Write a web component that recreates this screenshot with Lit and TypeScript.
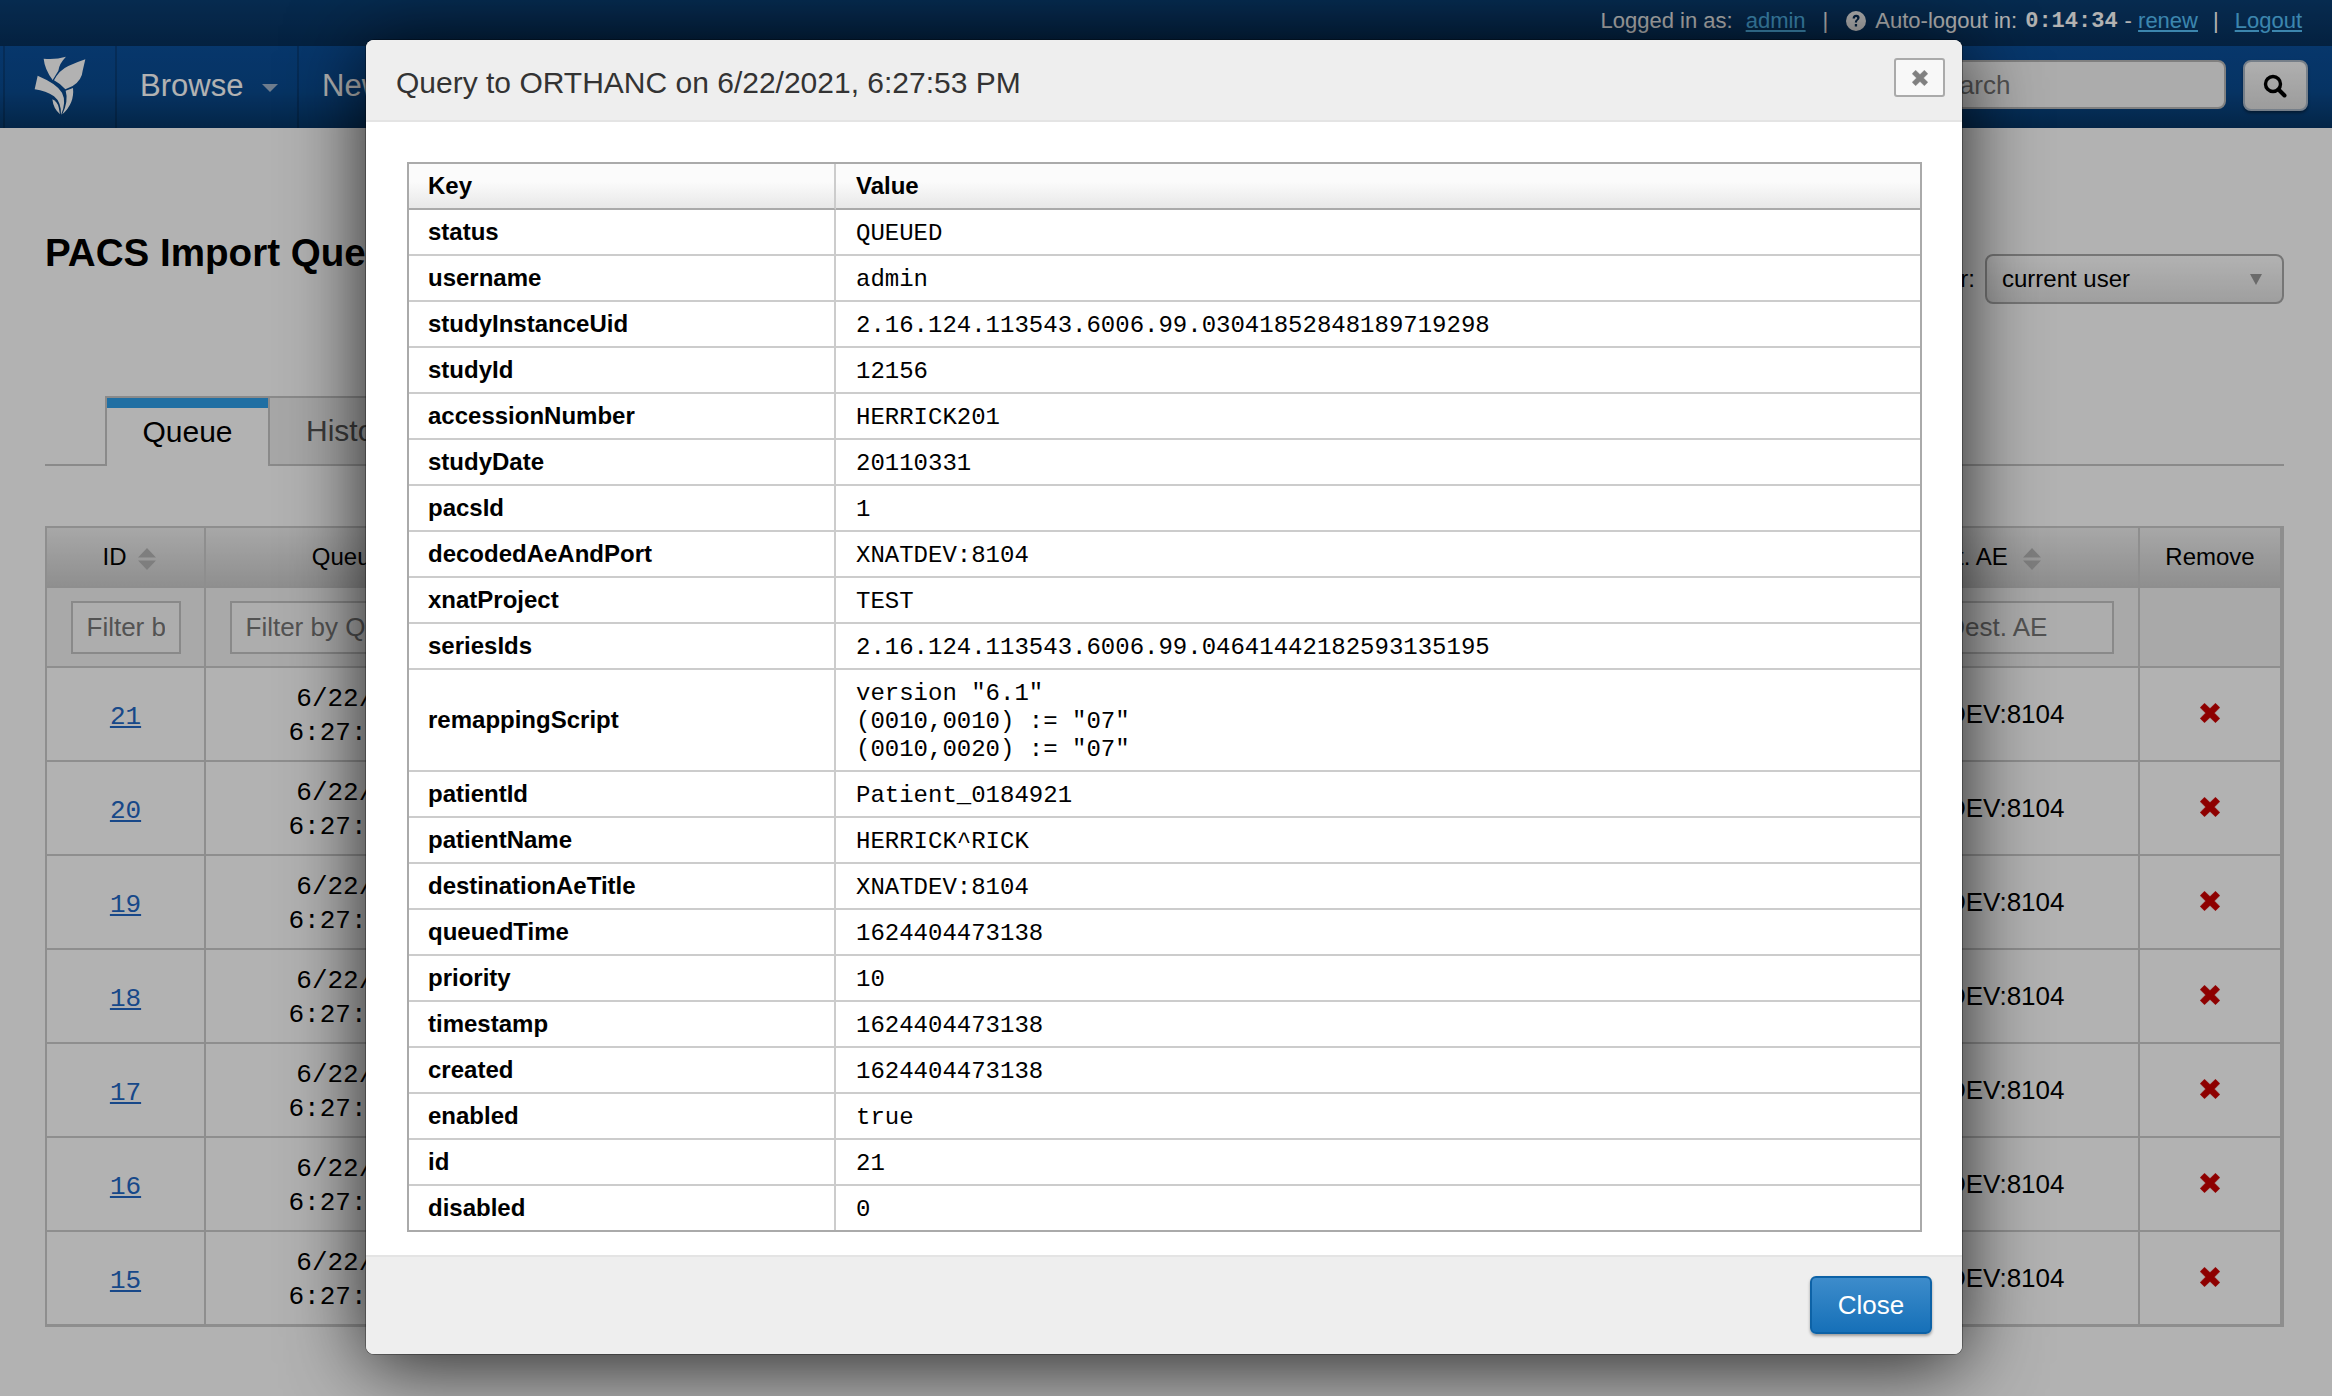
import { LitElement, html, css, svg } from "lit";
import { customElement } from "lit/decorators.js";

const sortIcon = html`<svg class="sort" viewBox="0 0 20 22" width="20" height="22"><path d="M10 0 L19 9.5 H1Z M1 12.5 H19 L10 22Z" fill="#b5b5b5"/></svg>`;
const xIcon = (size: number, cls: string) => html`<svg class=${cls} viewBox="0 0 20 20" width=${size} height=${size}><path d="M4.5 0.3 L10 5.6 L15.5 0.3 L19.8 4.6 L14.4 10 L19.8 15.4 L15.5 19.7 L10 14.4 L4.5 19.7 L0.2 15.4 L5.6 10 L0.2 4.6Z" fill="currentColor" stroke="currentColor" stroke-width="0.5" stroke-linejoin="round"/></svg>`;

const logo = html`<svg class="logo" viewBox="0 0 390 390" width="130" height="130">
  ${svg`<g fill="#fff">
    <path d="M131 176 Q165 180 198 170 Q178 190 175 212 L158 240 Q134 208 131 176Z"/>
    <path d="M256 178 L248 212 Q246 240 218 258 L196 268 Q180 250 162 241 Q178 210 205 198 Q232 186 256 178Z"/>
    <path d="M113 227 L104 268 Q138 273 162 289 Q184 306 183 345 Q200 305 186 278 Q172 252 113 227Z"/>
    <path d="M219 264 Q224 310 187 343 Q206 302 197 272Z"/>
    <path d="M157 298 Q172 305 176 322 L180 343 Q160 326 157 298Z"/>
  </g>`}
</svg>`;

const rows: [string, string][] = [
  ["status", "QUEUED"],
  ["username", "admin"],
  ["studyInstanceUid", "2.16.124.113543.6006.99.03041852848189719298"],
  ["studyId", "12156"],
  ["accessionNumber", "HERRICK201"],
  ["studyDate", "20110331"],
  ["pacsId", "1"],
  ["decodedAeAndPort", "XNATDEV:8104"],
  ["xnatProject", "TEST"],
  ["seriesIds", "2.16.124.113543.6006.99.04641442182593135195"],
  ["remappingScript", 'version "6.1"\n(0010,0010) := "07"\n(0010,0020) := "07"'],
  ["patientId", "Patient_0184921"],
  ["patientName", "HERRICK^RICK"],
  ["destinationAeTitle", "XNATDEV:8104"],
  ["queuedTime", "1624404473138"],
  ["priority", "10"],
  ["timestamp", "1624404473138"],
  ["created", "1624404473138"],
  ["enabled", "true"],
  ["id", "21"],
  ["disabled", "0"],
];

const queueIds = [21, 20, 19, 18, 17, 16, 15];

@customElement("app-root")
export class AppRoot extends LitElement {
  static styles = css`
    :host {
      display: block;
      position: relative;
      width: 2332px;
      height: 1396px;
      overflow: hidden;
      background: #fff;
      font-family: "Liberation Sans", Arial, sans-serif;
      color: #000;
    }
    * { box-sizing: border-box; }

    .topbar {
      height: 46px;
      background: linear-gradient(#0a3e72, #07305c);
      color: #fff;
      font-size: 22px;
      display: flex;
      justify-content: flex-end;
      align-items: center;
      padding: 0 30px 4px 0;
      white-space: nowrap;
    }
    .topbar a { color: #57c1fa; text-decoration: underline; }
    .topbar .gap { margin-left: 13px; }
    .topbar .sep { margin: 0 18px 0 17px; }
    .topbar .sep.b { margin: 0 16px 0 15px; }
    .topbar .help { margin-right: 9px; display: block; }
    .timer { font-family: "Liberation Mono", monospace; font-weight: bold; margin-left: 8px; margin-right: 7px; }

    .nav {
      height: 82px;
      background: linear-gradient(#0b4f9b 0%, #0a4a8f 55%, #063666 100%);
      display: flex;
      align-items: stretch;
      color: #fff;
    }
    .nav .edge { width: 5px; border-right: 2px solid rgba(0,0,0,.18); }
    .brandwrap { width: 112px; border-right: 2px solid rgba(0,0,0,.18); position: relative; }
    .logo { position: absolute; left: -5px; top: -46px; }
    .item {
      display: flex;
      align-items: center;
      font-size: 31px;
      padding: 0 0 2px 23px;
      border-right: 2px solid rgba(0,0,0,.18);
    }
    .item.browse { width: 182px; }
    .caret {
      width: 0; height: 0;
      margin-left: 19px;
      margin-top: 4px;
      border-left: 8px solid transparent;
      border-right: 8px solid transparent;
      border-top: 8px solid #9eb4cc;
    }
    .spacer { flex: 1; }
    .searchbox {
      width: 327px;
      height: 49px;
      margin-top: 14px;
      border: 2px solid #b8b8b8;
      border-radius: 8px;
      background: #f7f7f7;
      color: #777;
      font-size: 26px;
      display: flex;
      align-items: center;
      padding: 2px 0 0 27px;
    }
    .searchbtn {
      width: 65px;
      height: 51px;
      margin: 14px 24px 0 17px;
      border: 2px solid #a9b6c4;
      border-radius: 8px;
      background: linear-gradient(#fbfbfb, #e0e0e0);
      box-shadow: 0 2px 3px rgba(0,0,0,.4);
      display: flex;
      align-items: center;
      justify-content: center;
      padding-right: 2px;
    }

    .content { padding: 0 48px 0 45px; }
    .headrow {
      height: 268px;
      display: flex;
      justify-content: space-between;
      align-items: flex-start;
    }
    h1 {
      margin: 99px 0 0;
      font-size: 38.6px;
      line-height: 52px;
      font-weight: bold;
      white-space: nowrap;
    }
    .filter {
      margin-top: 126px;
      display: flex;
      align-items: center;
      gap: 10px;
      font-size: 24px;
    }
    .select {
      width: 299px;
      height: 50px;
      border: 2px solid #aaa;
      border-radius: 8px;
      background: linear-gradient(#fff, #e4e4e4);
      display: flex;
      align-items: center;
      justify-content: space-between;
      padding: 0 20px 0 15px;
    }
    .select i {
      width: 0; height: 0;
      border-left: 6px solid transparent;
      border-right: 6px solid transparent;
      border-top: 11px solid #999;
    }

    .tabs {
      height: 70px;
      border-bottom: 2px solid #c6c6c6;
      display: flex;
      align-items: flex-end;
      padding-left: 60px;
    }
    .tab {
      height: 70px;
      margin-bottom: -2px;
      font-size: 30px;
      display: flex;
      align-items: center;
      border: 2px solid #c6c6c6;
      border-left: 0;
      background: #f0f0f0;
      color: #555;
    }
    .tab.hist { width: 200px; padding-left: 36px; }
    .tab.active {
      width: 165px;
      justify-content: center;
      border-left: 2px solid #c6c6c6;
      border-bottom: 0;
      box-shadow: inset 0 10px 0 #2e9fea;
      background: #fff;
      color: #000;
      padding-bottom: 1px;
    }

    .queue {
      margin-top: 60px;
      width: 100%;
      table-layout: fixed;
      border-collapse: separate;
      border-spacing: 0;
      border: solid #ccc;
      border-width: 2px 4px 3px 2px;
    }
    .queue th, .queue td {
      border-bottom: 2px solid #ccc;
      border-right: 2px solid #ccc;
      text-align: center;
      padding: 0;
    }
    .queue th:last-child, .queue td:last-child { border-right: 0; }
    .queue tr:last-child td { border-bottom: 0; }
    .queue thead tr.h th {
      height: 60px;
      font-size: 24px;
      font-weight: normal;
      background: linear-gradient(#f0f0f0, #cdcdcd);
    }
    .queue thead tr.h th.pad-id { padding-left: 8px; }
    .queue thead tr.h th.pad-q { padding-left: 6px; }
    .queue thead tr.h th.pad-ae { padding-left: 12px; }
    .queue thead tr.f th { height: 80px; background: #f2f2f2; }
    .queue tbody td { height: 94px; font-size: 26px; padding-top: 1px; }
    .queue tbody td.lift { padding-top: 4px; }
    .queue tbody tr:last-child td { height: 92px; }
    .sort { margin-left: 10px; vertical-align: -5px; }
    .pad-ae .sort { margin-left: 14px; }
    .fi {
      display: block;
      margin: 0 auto;
      height: 53px;
      border: 2px solid #c4c4c4;
      border-radius: 0;
      background: #f8f8f8;
      font: 26px "Liberation Sans", Arial, sans-serif;
      padding: 0 14px;
      outline: none;
    }
    .fi::placeholder { color: #777; opacity: 1; }
    .id-link { font-family: "Liberation Mono", monospace; color: #2368c4; text-decoration: underline; }
    .date { font-family: "Liberation Mono", monospace; line-height: 34px; white-space: pre; }
    .rm { color: #cc0000; display: block; margin: 0 auto 3px; }

    .overlay {
      position: absolute;
      inset: 0;
      background: rgba(0,0,0,.3);
    }
    .modal {
      position: absolute;
      left: 366px;
      top: 40px;
      width: 1596px;
      height: 1314px;
      background: #fff;
      border-radius: 8px;
      box-shadow: 0 0 0 1px rgba(0,0,0,.3), 0 10px 80px rgba(0,0,0,.8);
      display: flex;
      flex-direction: column;
      overflow: hidden;
    }
    .mhead {
      height: 82px;
      flex: none;
      background: #eee;
      border-bottom: 2px solid #e4e4e4;
      display: flex;
      align-items: flex-start;
      justify-content: space-between;
      padding: 0 17px 0 30px;
    }
    .mtitle { font-size: 30px; line-height: 86px; color: #333; white-space: nowrap; }
    .mx {
      width: 51px;
      height: 39px;
      margin-top: 18px;
      background: #f8f8f8;
      border: 2px solid #aaa;
      border-radius: 3px;
      color: #808080;
      display: flex;
      align-items: center;
      justify-content: center;
    }
    .mbody { flex: 1; padding: 40px 40px 0 41px; }
    .kv {
      width: 1515px;
      table-layout: fixed;
      border-collapse: separate;
      border-spacing: 0;
      border: 2px solid #aaa;
      font-size: 24px;
      color: #000;
    }
    .kv th, .kv td {
      height: 46px;
      padding: 0 20px 0 19px;
      border-bottom: 2px solid #ccc;
      text-align: left;
      white-space: pre;
    }
    .kv tr:last-child td { border-bottom: 0; height: 44px; }
    .kv thead th {
      font-weight: bold;
      border-bottom-color: #aaa;
      background: linear-gradient(#fbfbfb 0%, #fbfbfb 40%, #e8e8e8 100%);
    }
    .kv thead th:last-child { padding-left: 20px; }
    .kv .k { font-weight: bold; border-right: 2px solid #ccc; }
    .kv td.v {
      font-family: "Liberation Mono", monospace;
      line-height: 28px;
      padding: 10px 20px 6px 20px;
    }
    .mfoot {
      height: 99px;
      flex: none;
      background: #eee;
      border-top: 2px solid #e4e4e4;
      display: flex;
      justify-content: flex-end;
      padding: 19px 30px 0 0;
    }
    .closebtn {
      width: 122px;
      height: 58px;
      border: 2px solid #0d62a6;
      border-radius: 6px;
      background: linear-gradient(#3d8ccb, #1670b8);
      color: #fff;
      font: 26px "Liberation Sans", Arial, sans-serif;
      box-shadow: 0 2px 3px rgba(0,0,0,.35);
      padding: 0;
    }
  `;

  render() {
    return html`
      <div class="topbar">
        <span>Logged in as:</span><a class="gap" href="#">admin</a>
        <span class="sep">|</span>
        <svg class="help" viewBox="0 0 20 20" width="20" height="20"><circle cx="10" cy="10" r="10" fill="#fff"/><path d="M6.6 7.4 Q6.8 3.8 10.2 3.8 Q13.6 3.9 13.6 6.8 Q13.5 8.6 11.8 9.6 Q11 10.2 11 11.6 H8.8 Q8.7 9.4 10.4 8.4 Q11.3 7.8 11.2 6.9 Q11 6 10.1 6 Q9 6 8.9 7.4Z M8.8 13 H11.1 V15.6 H8.8Z" fill="#07305c"/></svg>
        <span>Auto-logout in:</span><span class="timer">0:14:34</span><span>-&nbsp;</span><a href="#">renew</a>
        <span class="sep b">|</span>
        <a href="#">Logout</a>
      </div>
      <div class="nav">
        <div class="edge"></div>
        <div class="brandwrap">${logo}</div>
        <div class="item browse">Browse<span class="caret"></span></div>
        <div class="item">New</div>
        <div class="spacer"></div>
        <div class="searchbox">Search</div>
        <div class="searchbtn">
          <svg viewBox="0 0 24 24" width="24" height="24"><circle cx="10" cy="10" r="7.5" fill="none" stroke="#000" stroke-width="3.4"/><path d="M15.5 15.5 L21.5 21.5" stroke="#000" stroke-width="4" stroke-linecap="round"/></svg>
        </div>
      </div>
      <div class="content">
        <div class="headrow">
          <h1>PACS Import Queue</h1>
          <div class="filter"><span>Filter by user:</span><div class="select"><span>current user</span><i></i></div></div>
        </div>
        <div class="tabs">
          <div class="tab active">Queue</div>
          <div class="tab hist">History</div>
        </div>
        <table class="queue">
          <colgroup><col style="width:159px"/><col style="width:323px"/><col/><col style="width:334px"/><col style="width:140px"/></colgroup>
          <thead>
            <tr class="h"><th class="pad-id">ID${sortIcon}</th><th class="pad-q">Queued${sortIcon}</th><th></th><th class="pad-ae">Dest. AE${sortIcon}</th><th>Remove</th></tr>
            <tr class="f">
              <th><input class="fi" style="width:110px" placeholder="Filter by ID"/></th>
              <th><input class="fi" style="width:274px" placeholder="Filter by Queued"/></th>
              <th></th>
              <th><input class="fi" style="width:283px" placeholder="Filter by Dest. AE"/></th>
              <th></th>
            </tr>
          </thead>
          <tbody>
            ${queueIds.map(
              (id) => html`<tr>
                <td class="lift"><a class="id-link" href="#">${id}</a></td>
                <td class="date lift">6/22/2021\n6:27:53 PM</td>
                <td></td>
                <td>XNATDEV:8104</td>
                <td>${xIcon(20, "rm")}</td>
              </tr>`
            )}
          </tbody>
        </table>
      </div>
      <div class="overlay"></div>
      <div class="modal">
        <div class="mhead">
          <div class="mtitle">Query to ORTHANC on 6/22/2021, 6:27:53 PM</div>
          <div class="mx">${xIcon(16, "")}</div>
        </div>
        <div class="mbody">
          <table class="kv">
            <colgroup><col style="width:427px"/><col/></colgroup>
            <thead><tr><th class="k">Key</th><th>Value</th></tr></thead>
            <tbody>
              ${rows.map(([k, v]) => html`<tr><td class="k">${k}</td><td class="v">${v}</td></tr>`)}
            </tbody>
          </table>
        </div>
        <div class="mfoot"><button class="closebtn">Close</button></div>
      </div>
    `;
  }
}
